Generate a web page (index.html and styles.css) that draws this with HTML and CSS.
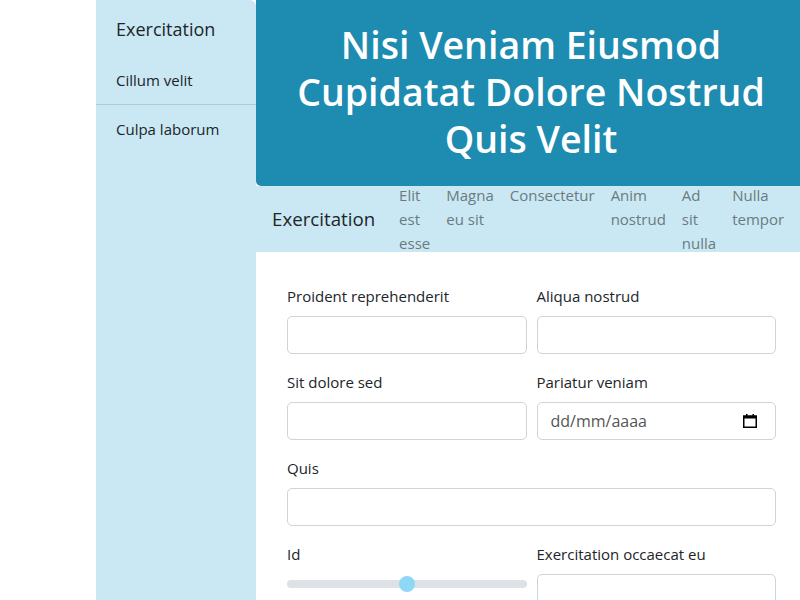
FILE: index.html
```html
<!DOCTYPE html>
<html lang="la">
<head>
<meta charset="utf-8">
<title>Exercitation</title>
<link rel="stylesheet" href="styles.css">
</head>
<body>
<div class="page">
  <aside class="sidebar">
    <div class="side-title">Exercitation</div>
    <ul class="side-list">
      <li class="side-item">Cillum velit</li>
      <li class="side-item">Culpa laborum</li>
    </ul>
  </aside>
  <main class="main">
    <header class="hero">
      <h1 class="hero-title">Nisi Veniam Eiusmod Cupidatat Dolore Nostrud Quis Velit</h1>
    </header>
    <nav class="navbar">
      <span class="brand">Exercitation</span>
      <ul class="nav-links">
        <li class="nav-link">Elit est esse</li>
        <li class="nav-link">Magna eu sit</li>
        <li class="nav-link">Consectetur</li>
        <li class="nav-link">Anim nostrud</li>
        <li class="nav-link">Ad sit nulla</li>
        <li class="nav-link">Nulla tempor</li>
      </ul>
    </nav>
    <form class="form">
      <div class="field">
        <label class="label">Proident reprehenderit</label>
        <div class="input"></div>
      </div>
      <div class="field">
        <label class="label">Aliqua nostrud</label>
        <div class="input"></div>
      </div>
      <div class="field">
        <label class="label">Sit dolore sed</label>
        <div class="input"></div>
      </div>
      <div class="field">
        <label class="label">Pariatur veniam</label>
        <div class="input date">
          <span class="date-text">dd/mm/aaaa</span>
          <svg class="cal" width="16" height="16" viewBox="0 0 16 16"><rect x="1.75" y="3.25" width="12.5" height="11" fill="none" stroke="#000" stroke-width="1.5"/><rect x="1" y="2.5" width="14" height="3" fill="#000"/><rect x="4" y="1" width="1.5" height="3" fill="#000"/><rect x="10.5" y="1" width="1.5" height="3" fill="#000"/></svg>
        </div>
      </div>
      <div class="field wide">
        <label class="label">Quis</label>
        <div class="input"></div>
      </div>
      <div class="field">
        <label class="label">Id</label>
        <div class="range"><div class="track"></div><div class="thumb"></div></div>
      </div>
      <div class="field">
        <label class="label">Exercitation occaecat eu</label>
        <div class="input"></div>
      </div>
    </form>
  </main>
</div>
</body>
</html>
```
FILE: styles.css
```css
* { box-sizing: border-box; }
html, body { margin: 0; padding: 0; }
body {
  font-family: "Open Sans", "Noto Sans", sans-serif;
  color: #212529;
  background: #fff;
  overflow: hidden;
  width: 800px;
  height: 600px;
}
.page {
  display: flex;
  padding-left: 96px;
  height: 600px;
}
.sidebar {
  flex: 0 0 160px;
  background: #c9e8f3;
  border-top-right-radius: 6px;
}
.side-title {
  font-size: 18px;
  line-height: 26px;
  padding: 16px 20px 14px;
}
.side-list { list-style: none; margin: 0; padding: 0; }
.side-item {
  font-size: 15px;
  line-height: 24px;
  padding: 12px 20px;
}
.side-item + .side-item { border-top: 1px solid #a8cdd9; }
.main {
  flex: 0 0 550px;
  display: flex;
  flex-direction: column;
}
.hero {
  position: relative;
  z-index: 1;
  flex: 0 0 186px;
  background: #1e8bb0;
  border-bottom-left-radius: 5px;
  display: flex;
  align-items: center;
  justify-content: center;
}
.hero-title {
  margin: 0 0 4px;
  color: #fff;
  text-align: center;
  font-size: 37.5px;
  line-height: 47px;
  font-weight: 600;
  padding: 0 20px;
}
.navbar {
  flex: 0 0 66px;
  height: 66px;
  min-height: 0;
  background: #c9e8f3;
  display: flex;
  align-items: center;
  padding-left: 16px;
  flex-wrap: nowrap;
}
.brand {
  font-size: 18.7px;
  line-height: 30px;
  margin-right: 16px;
  white-space: nowrap;
  flex: 0 0 auto;
}
.nav-links {
  display: flex;
  align-items: flex-start;
  list-style: none;
  margin: 0;
  padding: 0;
}
.nav-link {
  font-size: 15px;
  line-height: 24px;
  color: #6c7a80;
  padding: 0 8px;
  width: min-content;
  box-sizing: content-box;
  flex: 0 0 auto;
}
.form {
  flex: 0 0 auto;
  display: grid;
  grid-template-columns: 1fr 1fr;
  column-gap: 10px;
  row-gap: 16px;
  padding: 32px 30px 0 31px;
}
.field { display: flex; flex-direction: column; gap: 8px; }
.field.wide { grid-column: 1 / 3; }
.label {
  font-size: 15px;
  line-height: 24px;
}
.input {
  height: 38px;
  border: 1px solid #ced4da;
  border-radius: 5px;
  background: #fff;
}
.date {
  display: flex;
  align-items: center;
  justify-content: space-between;
  padding: 0 17px 0 13px;
}
.date-text { font-size: 16px; color: #555; }
.cal { display: block; }
.range {
  position: relative;
  height: 38px;
}
.track {
  margin-top: 6px;
  height: 8px;
  border-radius: 4px;
  background: #dee2e6;
}
.thumb {
  position: absolute;
  left: calc(50% - 8px);
  top: 2px;
  width: 16px;
  height: 16px;
  border-radius: 50%;
  background: #8fd8f5;
}
```
